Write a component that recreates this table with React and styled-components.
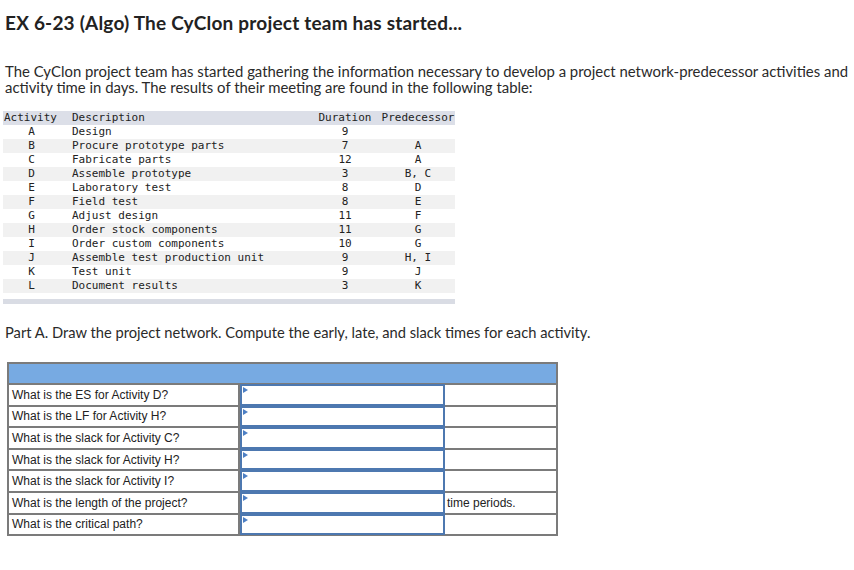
import React from "react";
import styled, { createGlobalStyle } from "styled-components";

const Global = createGlobalStyle`
  html, body { margin: 0; padding: 0; background: #fff; }
  body { font-family: "Lato", "Open Sans", sans-serif; color: #222; }
`;

const Page = styled.div`
  padding: 10px 0 0 5px;
  width: 849px;
`;

const Title = styled.h1`
  margin: 0;
  font-size: 19px;
  line-height: 26px;
  font-weight: 700;
  letter-spacing: 0.2px;
  color: #222;
`;

const Intro = styled.p`
  margin: 27px 0 0 0;
  font-size: 14.9px;
  line-height: 16px;
  color: #2a2a2a;
`;

const DataTable = styled.div`
  margin: 16px 0 0 -2px;
  width: 452px;
  font-family: "DejaVu Sans Mono", "Liberation Mono", monospace;
  font-size: 11px;
  color: #222;
`;

const DataRow = styled.div`
  display: grid;
  grid-template-columns: 55px 13px 244px 58px 7px 74px;
  height: 14px;
  line-height: 14px;
  padding-left: 1px;
  background: ${(p) => (p.$head ? "#dcdfe8" : p.$stripe ? "#f1f1f1" : "#fff")};
  white-space: pre;
`;

const Cell = styled.span`
  text-align: ${(p) => p.$align || "left"};
  grid-column: ${(p) => p.$col};
`;

const BottomBar = styled.div`
  height: 5px;
  margin-top: 6px;
  background: #d9dce4;
`;

const PartA = styled.p`
  margin: 20px 0 0 0;
  font-size: 14.7px;
  line-height: 16px;
  color: #2a2a2a;
`;

const AnswerTable = styled.table`
  margin: 22px 0 0 2px;
  border-collapse: collapse;
  width: 549px;
  font-family: "Liberation Sans", Arial, sans-serif;
  font-size: 12px;
  color: #222;
  table-layout: fixed;
`;

const HeadCell = styled.th`
  background: #77aae2;
  height: 19px;
  border: 2px solid #7b7b7b;
  padding: 0;
`;

const Q = styled.td`
  border: 2px solid #7b7b7b;
  height: 19.6px;
  padding: 0 0 0 3px;
  white-space: nowrap;
`;

const InputCell = styled.td`
  border: 2px solid #7b7b7b;
  padding: 0;
  height: 19.6px;
  position: relative;
`;

const Box = styled.div`
  position: absolute;
  inset: -1px -2px -1px 0;
  border: 2px solid #4d78b0;
  box-sizing: border-box;
  background: #fff;
  &::before {
    content: "";
    position: absolute;
    left: 1px;
    top: 1px;
    border-left: 5px solid #4d7fc4;
    border-top: 3px solid transparent;
    border-bottom: 3px solid transparent;
  }
`;

const Unit = styled.td`
  border: 2px solid #7b7b7b;
  padding: 0 0 0 2px;
  height: 19.6px;
`;

const rows = [
  ["A", "Design", "9", ""],
  ["B", "Procure prototype parts", "7", "A"],
  ["C", "Fabricate parts", "12", "A"],
  ["D", "Assemble prototype", "3", "B, C"],
  ["E", "Laboratory test", "8", "D"],
  ["F", "Field test", "8", "E"],
  ["G", "Adjust design", "11", "F"],
  ["H", "Order stock components", "11", "G"],
  ["I", "Order custom components", "10", "G"],
  ["J", "Assemble test production unit", "9", "H, I"],
  ["K", "Test unit", "9", "J"],
  ["L", "Document results", "3", "K"],
];

const questions = [
  ["What is the ES for Activity D?", ""],
  ["What is the LF for Activity H?", ""],
  ["What is the slack for Activity C?", ""],
  ["What is the slack for Activity H?", ""],
  ["What is the slack for Activity I?", ""],
  ["What is the length of the project?", "time periods."],
  ["What is the critical path?", ""],
];

export default function App() {
  return (
    <Page>
      <Global />
      <Title>EX 6-23 (Algo) The CyClon project team has started...</Title>
      <Intro>
        The CyClon project team has started gathering the information necessary to develop a project network-predecessor activities and
        activity time in days. The results of their meeting are found in the following table:
      </Intro>
      <DataTable>
        <DataRow $head>
          <Cell $col="1">Activity</Cell>
          <Cell $col="3">Description</Cell>
          <Cell $col="4" $align="center">Duration</Cell>
          <Cell $col="6" $align="center">Predecessor</Cell>
        </DataRow>
        {rows.map((r, i) => (
          <DataRow key={r[0]} $stripe={i % 2 === 1}>
            <Cell $col="1" $align="center">{r[0]}</Cell>
            <Cell $col="3">{r[1]}</Cell>
            <Cell $col="4" $align="center">{r[2]}</Cell>
            <Cell $col="6" $align="center">{r[3]}</Cell>
          </DataRow>
        ))}
        <BottomBar />
      </DataTable>
      <PartA>Part A. Draw the project network. Compute the early, late, and slack times for each activity.</PartA>
      <AnswerTable>
        <colgroup>
          <col style={{ width: 231 }} />
          <col style={{ width: 205 }} />
          <col style={{ width: 113 }} />
        </colgroup>
        <thead>
          <tr>
            <HeadCell colSpan={3} />
          </tr>
        </thead>
        <tbody>
          {questions.map(([q, u]) => (
            <tr key={q}>
              <Q>{q}</Q>
              <InputCell>
                <Box />
              </InputCell>
              <Unit>{u}</Unit>
            </tr>
          ))}
        </tbody>
      </AnswerTable>
    </Page>
  );
}
